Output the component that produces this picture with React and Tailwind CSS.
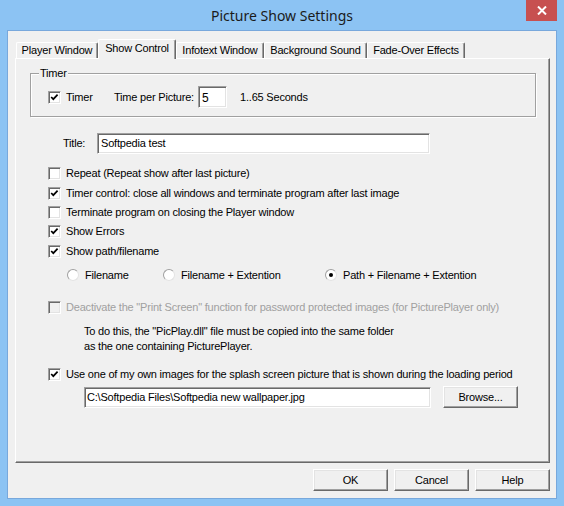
import React from 'react';

const sunken =
  'border border-t-[#a0a0a0] border-l-[#a0a0a0] border-r-white border-b-white shadow-[inset_1px_1px_0_#696969,inset_-1px_-1px_0_#e3e3e3]';
const raised =
  'border border-t-white border-l-white border-r-[#696969] border-b-[#696969] shadow-[inset_-1px_-1px_0_#a0a0a0,inset_1px_1px_0_#e3e3e3]';

const Check = ({ checked, disabled }) => (
  <span
    className={`w-[13px] h-[13px] shrink-0 flex items-center justify-center ${sunken} ${
      disabled ? 'bg-[#f0f0f0]' : 'bg-white'
    }`}
  >
    {checked && (
      <svg width="11" height="11" viewBox="0 0 11 11">
        <path d="M2.2 5 L4.3 7.2 L8.6 2.6" fill="none" stroke="#000" strokeWidth="1.7" />
      </svg>
    )}
  </span>
);

const CheckRow = ({ checked, disabled, h, children }) => (
  <div className={`flex items-center ml-[32px] ${h}`}>
    <Check checked={checked} disabled={disabled} />
    <span className={`ml-[5px] ${disabled ? 'text-[#a0a0a0]' : ''}`}>{children}</span>
  </div>
);

const Radio = ({ on, label, w }) => (
  <div className={`flex items-center ${w}`}>
    <span className="w-[12px] h-[12px] shrink-0 rounded-full bg-white border border-[#a0a0a0] border-r-[#e3e3e3] border-b-[#e3e3e3] flex items-center justify-center">
      {on && <span className="w-[4px] h-[4px] rounded-full bg-black" />}
    </span>
    <span className="ml-[6px]">{label}</span>
  </div>
);

const Tab = ({ label, w, active }) => (
  <div
    className={`${w} flex items-center justify-center rounded-t-[2px] border border-b-0 border-t-white border-l-white border-r-[#696969] shadow-[inset_-1px_0_0_#a0a0a0] bg-[#f0f0f0] ${
      active ? 'h-[20px] mb-[-1px] pb-[3px]' : 'h-[16px]'
    }`}
  >
    {label}
  </div>
);

export default function App() {
  return (
    <div
      className="w-[564px] h-[506px] bg-[#8cc3f3] flex flex-col text-[11px] tracking-[-0.2px] text-black"
      style={{ fontFamily: '"Liberation Sans", Arial, sans-serif' }}
    >
      {/* title bar */}
      <div className="h-[31px] relative flex items-start justify-center">
        <span
          className="mt-[5px] text-[14px] tracking-normal text-[#1b1b1b]"
          style={{ fontFamily: '"Noto Sans", "Open Sans", sans-serif' }}
        >
          Picture Show Settings
        </span>
        <div className="absolute right-[7px] top-0 w-[31px] h-[21px] bg-[#c75050] flex items-center justify-center">
          <svg width="10" height="9" viewBox="0 0 10 9">
            <path d="M1 0.5 L9 8.5 M9 0.5 L1 8.5" stroke="#fff" strokeWidth="2" />
          </svg>
        </div>
      </div>

      {/* client */}
      <div className="mx-[8px] h-[467px] bg-[#f0f0f0] flex flex-col shadow-[0_0_0_1px_#78a8dc]">
        <div className="h-[27px] flex items-end pl-[8px] relative z-10">
          <Tab w="w-[82px]" label="Player Window" />
          <Tab w="w-[78px]" label="Show Control" active />
          <Tab w="w-[88px]" label="Infotext Window" />
          <Tab w="w-[103px]" label="Background Sound" />
          <Tab w="w-[98px]" label="Fade-Over Effects" />
        </div>

        <div className="ml-[7px] w-[535px] h-[405px] border border-t-white border-l-white border-r-[#696969] border-b-[#696969] shadow-[inset_-1px_-1px_0_#a0a0a0] flex flex-col">
          {/* Timer group */}
          <div className="relative ml-[14px] mt-[14px] w-[506px] border border-[#a0a0a0] shadow-[inset_1px_1px_0_#fff,1px_1px_0_#fff] pt-[12px] pb-[8px]">
            <span className="absolute left-[8px] top-[-7px] bg-[#f0f0f0] px-[1px] leading-[13px]">Timer</span>
            <div className="flex items-center h-[22px] ml-[17px]">
              <Check checked />
              <span className="ml-[5px] w-[48px]">Timer</span>
              <span className="w-[84px]">Time per Picture:</span>
              <div className={`w-[29px] h-[22px] bg-white ${sunken} pl-[3px] pt-[2px] text-[12px]`}>5</div>
              <span className="ml-[13px]">1..65 Seconds</span>
            </div>
          </div>

          {/* Title */}
          <div className="flex items-center mt-[16px] ml-[47px]">
            <span className="w-[34px]">Title:</span>
            <div className={`w-[333px] h-[21px] bg-white ${sunken} pl-[3px] flex items-center`}>Softpedia test</div>
          </div>

          <div className="mt-[9px] flex flex-col">
            <CheckRow h="h-[20px]">Repeat (Repeat show after last picture)</CheckRow>
            <CheckRow h="h-[20px]" checked>
              Timer control: close all windows and terminate program after last image
            </CheckRow>
            <CheckRow h="h-[19px]">Terminate program on closing the Player window</CheckRow>
            <CheckRow h="h-[19px]" checked>Show Errors</CheckRow>
            <CheckRow h="h-[21px]" checked>Show path/filename</CheckRow>
          </div>

          <div className="mt-[3px] h-[20px] flex items-center ml-[51px]">
            <Radio w="w-[96px]" label="Filename" />
            <Radio w="w-[162px]" label="Filename + Extention" />
            <Radio on label="Path + Filename + Extention" />
          </div>

          <div className="mt-[12px]">
            <CheckRow h="h-[20px]" disabled>
              Deactivate the "Print Screen" function for password protected images (for PicturePlayer only)
            </CheckRow>
          </div>

          <div className="mt-[7px] ml-[68px] leading-[15px]">
            <p>To do this, the "PicPlay.dll" file must be copied into the same folder</p>
            <p>as the one containing PicturePlayer.</p>
          </div>

          <div className="mt-[10px]">
            <CheckRow h="h-[20px]" checked>
              Use one of my own images for the splash screen picture that is shown during the loading period
            </CheckRow>
          </div>

          <div className="mt-[2px] ml-[68px] flex items-center">
            <div className={`w-[347px] h-[21px] bg-white ${sunken} pl-[2px] flex items-center`}>
              C:\Softpedia Files\Softpedia new wallpaper.jpg
            </div>
            <button className={`ml-[12px] w-[75px] h-[22px] bg-[#f0f0f0] ${raised}`}>Browse...</button>
          </div>
        </div>

        <div className="mt-[6px] flex justify-end gap-[6px] pr-[6px]">
          <button className={`w-[75px] h-[22px] bg-[#f0f0f0] ${raised}`}>OK</button>
          <button className={`w-[75px] h-[22px] bg-[#f0f0f0] ${raised}`}>Cancel</button>
          <button className={`w-[75px] h-[22px] bg-[#f0f0f0] ${raised}`}>Help</button>
        </div>
      </div>
    </div>
  );
}
